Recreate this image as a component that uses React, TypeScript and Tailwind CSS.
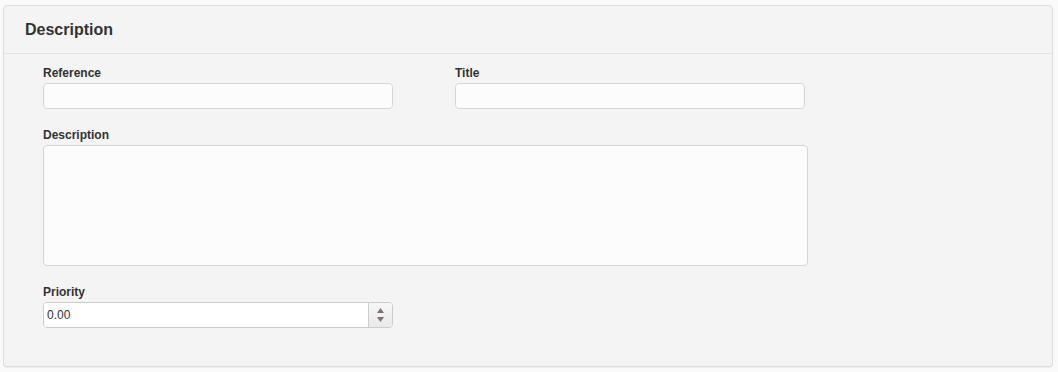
import { useState } from 'react';

const font = { fontFamily: '"Liberation Sans", Arial, sans-serif' };

function Label({ children }: { children: React.ReactNode }) {
    return <label className="block text-[12px] leading-[16px] font-bold text-[#333] mb-[2px]">{children}</label>;
}

export default function App() {
    const [priority, setPriority] = useState('0.00');

    return (
        <div className="w-[1058px] h-[372px] bg-[#fafafa] pt-[5px] pl-[3px]" style={font}>
            <div className="w-[1050px] h-[362px] bg-[#f4f4f4] border border-[#dddddd] rounded-[4px] shadow-[0_1px_1px_rgba(0,0,0,0.06)] flex flex-col">
                <div className="h-[48px] border-b border-[#e3e3e3] flex items-center px-[21px]">
                    <h3 className="text-[16px] font-bold text-[#333]">Description</h3>
                </div>

                <div className="pl-[39px] pt-[11px]">
                    <div className="grid grid-cols-[350px_350px] gap-x-[62px]">
                        <div>
                            <Label>Reference</Label>
                            <input className="block w-[350px] h-[26px] bg-[#fcfcfc] border border-[#d6d6d6] rounded-[4px] px-[4px] text-[12px] text-[#333] outline-none" />
                        </div>
                        <div>
                            <Label>Title</Label>
                            <input className="block w-[350px] h-[26px] bg-[#fcfcfc] border border-[#d6d6d6] rounded-[4px] px-[4px] text-[12px] text-[#333] outline-none" />
                        </div>
                    </div>

                    <div className="mt-[18px]">
                        <Label>Description</Label>
                        <textarea className="block w-[765px] h-[121px] bg-[#fcfcfc] border border-[#d6d6d6] rounded-[4px] p-[4px] text-[12px] text-[#333] outline-none resize-none" />
                    </div>

                    <div className="mt-[18px]">
                        <Label>Priority</Label>
                        <div className="flex w-[350px] h-[26px] bg-white border border-[#cccccc] rounded-[4px] overflow-hidden">
                            <input
                                value={priority}
                                onChange={(e) => setPriority(e.target.value)}
                                className="flex-1 min-w-0 px-[3px] text-[12px] text-[#333] bg-white outline-none"
                            />
                            <div className="w-[24px] border-l border-[#cccccc] bg-gradient-to-b from-[#f7f7f7] to-[#e9e9e9] flex flex-col items-center justify-center gap-[4px]">
                                <svg width="7" height="5" viewBox="0 0 7 5"><path d="M3.5 0L7 5H0z" fill="#7a7370" /></svg>
                                <svg width="7" height="5" viewBox="0 0 7 5"><path d="M0 0h7L3.5 5z" fill="#7a7370" /></svg>
                            </div>
                        </div>
                    </div>
                </div>
            </div>
        </div>
    );
}
